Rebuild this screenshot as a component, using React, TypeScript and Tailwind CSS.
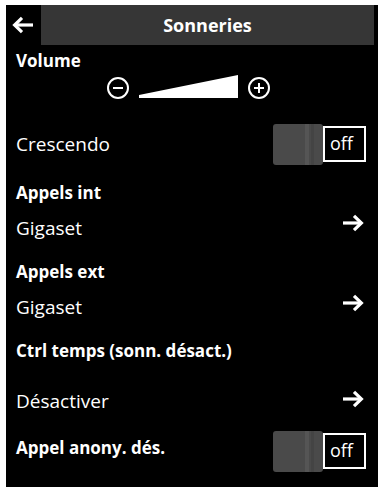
import React from "react"

function ArrowIcon({ left = false }: { left?: boolean }) {
  return (
    <svg width="22" height="18" viewBox="0 0 22 18" className={left ? "rotate-180" : ""}>
      <path d="M1 9H19" stroke="white" strokeWidth="3.2" fill="none" />
      <path d="M12 1.8L19.4 9L12 16.2" stroke="white" strokeWidth="3.2" fill="none" strokeLinejoin="miter" />
    </svg>
  )
}

function Toggle() {
  return (
    <div className="flex items-center">
      <div className="relative w-[50px] h-[41px] rounded-[3px] bg-[#4a4a4a] overflow-hidden">
        <div className="absolute top-0 bottom-0 left-[32px] w-[4px] bg-[#555555]" />
        <div className="absolute top-0 bottom-0 left-[38px] w-[3px] bg-[#444444]" />
      </div>
      <div className="w-[43px] h-[36px] border-2 border-white flex items-center pl-[5px] text-[18px] leading-none pb-[2px]">
        off
      </div>
    </div>
  )
}

function Circle({ plus = false }: { plus?: boolean }) {
  return (
    <div className="relative w-[22px] h-[22px] rounded-full border-2 border-white">
      <div className="absolute left-[4px] right-[4px] top-1/2 h-[2px] -mt-[1px] bg-white" />
      {plus && <div className="absolute top-[4px] bottom-[4px] left-1/2 w-[2px] -ml-[1px] bg-white" />}
    </div>
  )
}

export default function App() {
  return (
    <div className="w-[378px] h-[487px] bg-white pt-[5px] pl-[6px] font-['Open_Sans',sans-serif] text-white">
      <div className="h-full bg-black flex flex-col">
        <header className="flex h-[40px]">
          <div className="w-[35px] flex items-center justify-center pr-[1px]">
            <ArrowIcon left />
          </div>
          <div className="flex-1 mr-[4px] bg-[#363636] flex items-center justify-center text-[18px] font-bold">
            Sonneries
          </div>
        </header>

        <div className="pl-[10px] pr-[12px] flex flex-col">
          <div className="mt-[4px] h-[24px] flex items-center text-[17px] font-bold">Volume</div>

          <div className="mt-[3px] h-[24px] flex items-end pl-[91px]">
            <div className="mb-[1px]"><Circle /></div>
            <svg width="99" height="23" viewBox="0 0 99 23" className="ml-[10px] mb-[2px]">
              <polygon points="0,20 99,0 99,23 0,23" fill="white" />
            </svg>
            <div className="ml-[10px] mb-[1px]"><Circle plus /></div>
          </div>

          <div className="mt-[22px] h-[44px] flex items-center justify-between text-[19px]">
            <span>Crescendo</span>
            <Toggle />
          </div>

          <div className="mt-[15px] h-[24px] flex items-center text-[17px] font-bold">Appels int</div>
          <div className="mt-[8px] h-[30px] flex items-center justify-between text-[19px]">
            <span>Gigaset</span>
            <span className="mr-[2px] mb-[10px]"><ArrowIcon /></span>
          </div>

          <div className="mt-[17px] h-[24px] flex items-center text-[17px] font-bold">Appels ext</div>
          <div className="mt-[8px] h-[30px] flex items-center justify-between text-[19px]">
            <span>Gigaset</span>
            <span className="mr-[2px] mb-[8px]"><ArrowIcon /></span>
          </div>

          <div className="mt-[17px] h-[24px] flex items-center text-[17px] font-bold">Ctrl temps (sonn. désact.)</div>
          <div className="mt-[23px] h-[30px] flex items-center justify-between text-[19px]">
            <span>Désactiver</span>
            <span className="mr-[2px] mb-[4px]"><ArrowIcon /></span>
          </div>

          <div className="mt-[15px] h-[40px] flex items-center justify-between">
            <span className="text-[17px] font-bold leading-[24px] mb-[7px]">Appel anony. dés.</span>
            <Toggle />
          </div>
        </div>
      </div>
    </div>
  )
}
